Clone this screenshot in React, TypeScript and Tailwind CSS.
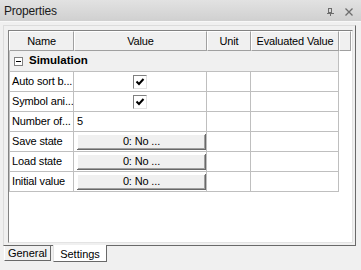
import type { ReactNode } from 'react'

const rows: { name: string; kind: 'check' | 'text' | 'button'; value?: string }[] = [
  { name: 'Auto sort b...', kind: 'check' },
  { name: 'Symbol ani...', kind: 'check' },
  { name: 'Number of...', kind: 'text', value: '5' },
  { name: 'Save state', kind: 'button', value: '0: No ...' },
  { name: 'Load state', kind: 'button', value: '0: No ...' },
  { name: 'Initial value', kind: 'button', value: '0: No ...' },
]

function HeaderCell({ w, children }: { w: string; children?: ReactNode }) {
  return (
    <div
      className={`${w} h-full flex items-center justify-center bg-[#f0f0f0] border-t border-l border-white border-r border-b border-r-[#a0a0a0] border-b-[#a0a0a0]`}
    >
      {children}
    </div>
  )
}

function Check() {
  return (
    <div className="w-[14px] h-[14px] bg-white border border-t-[#808080] border-l-[#808080] border-r-[#e3e3e3] border-b-[#e3e3e3] flex items-center justify-center">
      <svg width="12" height="12" viewBox="0 0 12 12">
        <polyline points="2.5,5.5 5,8 9.5,3" fill="none" stroke="#000" strokeWidth="2" />
      </svg>
    </div>
  )
}

export default function App() {
  return (
    <div className="w-[361px] h-[270px] bg-[#f0f0f0] flex flex-col font-['Liberation_Sans',Arial,sans-serif] text-[11px] text-black overflow-hidden">
      {/* Title bar */}
      <div className="h-[22px] flex items-center justify-between pl-[4px] pr-[8px] bg-gradient-to-b from-[#e2e2e2] to-[#d0d0d0] border-b border-[#f8f8f8]">
        <span className="text-[12px] text-[#1a1a1a] tracking-[-0.2px]">Properties</span>
        <div className="flex items-center gap-[11px] pt-[2px]">
          <svg width="7" height="8" viewBox="0 0 7 8">
            <rect x="1.5" y="0.5" width="3" height="4" fill="none" stroke="#6d6d6d" />
            <line x1="0" y1="5.5" x2="7" y2="5.5" stroke="#6d6d6d" />
            <line x1="3.5" y1="5.5" x2="3.5" y2="8" stroke="#6d6d6d" />
          </svg>
          <svg width="8" height="8" viewBox="0 0 8 8">
            <path d="M0.5 0.5 L7.5 7.5 M7.5 0.5 L0.5 7.5" stroke="#6d6d6d" strokeWidth="1.3" />
          </svg>
        </div>
      </div>

      {/* Tab page */}
      <div className="pt-[3px] pl-[3px]">
        <div className="w-[353px] h-[221px] border border-l-[#dcdcdc] border-t-[#dcdcdc] border-r-[#696969] border-b-[#696969] pl-[4px] pt-[4px] pr-[2px] pb-[2px]">
          <div className="w-full h-full bg-white border border-l-[#828282] border-t-[#828282] border-r-[#e3e3e3] border-b-[#e3e3e3] tracking-[-0.15px]">
            {/* Header */}
            <div className="flex h-[20px]">
              <HeaderCell w="w-[65px]">Name</HeaderCell>
              <HeaderCell w="w-[133px]">Value</HeaderCell>
              <HeaderCell w="w-[44px]">Unit</HeaderCell>
              <HeaderCell w="w-[88px]">Evaluated Value</HeaderCell>
              <HeaderCell w="w-[12px]" />
            </div>

            {/* Category */}
            <div className="w-[330px] h-[21px] flex items-center bg-[#f0f0f0] border-l border-r border-b border-[#bfbfbf]">
              <div className="ml-[4px] w-[9px] h-[9px] border border-[#808080] bg-white flex items-center justify-center">
                <div className="w-[5px] h-px bg-black" />
              </div>
              <span className="ml-[6px] font-bold tracking-normal text-[11.5px]">Simulation</span>
            </div>

            {/* Rows */}
            {rows.map((r) => (
              <div key={r.name} className="flex w-[330px] h-[20px] border-b border-[#bfbfbf]">
                <div className="w-[65px] border-l border-r border-[#bfbfbf] pl-[2px] flex items-center whitespace-nowrap overflow-hidden">
                  {r.name}
                </div>
                <div className="w-[133px] border-r border-[#bfbfbf] flex items-center">
                  {r.kind === 'check' && (
                    <div className="w-full flex justify-center">
                      <Check />
                    </div>
                  )}
                  {r.kind === 'text' && <span className="pl-[3px]">{r.value}</span>}
                  {r.kind === 'button' && (
                    <div className="ml-[3px] w-[129px] h-[16px] bg-[#f0f0f0] flex items-center justify-center shadow-[inset_-1px_-1px_0_#696969,inset_1px_1px_0_#ffffff,inset_-2px_-2px_0_#a0a0a0]">
                      {r.value}
                    </div>
                  )}
                </div>
                <div className="w-[44px] border-r border-[#bfbfbf]" />
                <div className="w-[88px] border-r border-[#bfbfbf]" />
              </div>
            ))}
          </div>
        </div>
      </div>

      {/* Tabs */}
      <div className="flex items-start pl-[4px]">
        <div className="w-[47px] h-[15px] flex items-center justify-center border-r border-b border-[#696969] border-l border-l-white">
          General
        </div>
        <div className="ml-[2px] w-[54px] h-[17px] -mt-px flex items-center justify-center bg-white border-l border-l-[#e3e3e3] border-r border-b border-[#696969] pt-[2px]">
          Settings
        </div>
      </div>
    </div>
  )
}
